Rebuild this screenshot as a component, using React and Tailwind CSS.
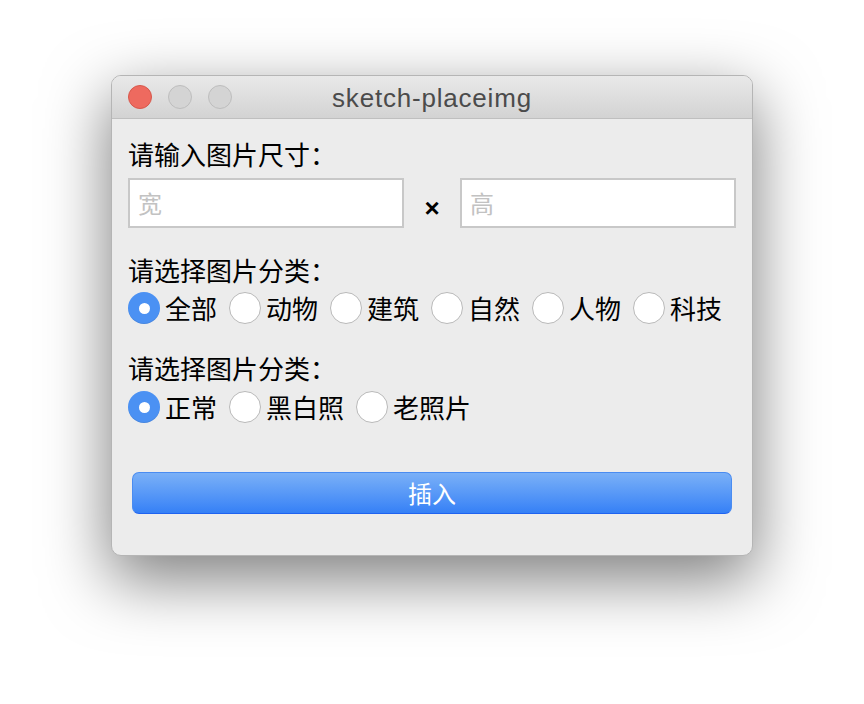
import React from "react";

const cjk = { fontFamily: '"Noto Sans CJK SC", "Noto Sans", sans-serif' };

function Radio({ checked, label }) {
  return (
    <div className="flex items-center mr-[12px]">
      {checked ? (
        <div className="w-[32px] h-[32px] rounded-full bg-[#4b91f3] flex items-center justify-center shadow-[inset_0_-1px_0_rgba(0,0,0,0.08)]">
          <div className="w-[11px] h-[11px] rounded-full bg-white" />
        </div>
      ) : (
        <div className="w-[32px] h-[32px] rounded-full bg-white border-[1.5px] border-[#b9b9b9] box-border" />
      )}
      <span className="ml-[5px] text-[26px] leading-[32px] text-black" style={cjk}>
        {label}
      </span>
    </div>
  );
}

export default function App() {
  return (
    <div className="w-[864px] h-[704px] bg-white pt-[75px] overflow-hidden">
      <div className="w-[642px] ml-[111px] rounded-[10px] border border-[#b5b5b5] bg-[#ececec] shadow-[0_22px_64px_2px_rgba(0,0,0,0.5)] overflow-hidden">
        {/* Title bar */}
        <div className="relative h-[43px] bg-gradient-to-b from-[#e9e9e9] to-[#d3d3d3] border-b border-[#bfbfbf] flex items-center">
          <div className="flex items-center gap-[16px] pl-[16px]">
            <div className="w-[24px] h-[24px] rounded-full bg-[#ee6a5f] border border-[#d6584c]" />
            <div className="w-[24px] h-[24px] rounded-full bg-[#d4d4d4] border border-[#bdbdbd]" />
            <div className="w-[24px] h-[24px] rounded-full bg-[#d4d4d4] border border-[#bdbdbd]" />
          </div>
          <div
            className="absolute inset-0 flex items-center justify-center pt-[3px] text-[26px] tracking-[0.8px] text-[#4b4b4b]"
            style={{ fontFamily: '"Liberation Sans", Arial, sans-serif' }}
          >
            sketch-placeimg
          </div>
        </div>

        {/* Body */}
        <div className="pl-[16px] pr-[15px] pt-[20px] pb-[41px]">
          <div className="text-[26px] leading-[30px] text-black" style={cjk}>
            请输入图片尺寸：
          </div>
          <div className="flex items-center mt-[9px]">
            <div
              className="w-[276px] h-[50px] bg-white border-2 border-[#c8c8c8] flex items-center pl-[8px] text-[24px] text-[#c2c2c2]"
              style={cjk}
            >
              宽
            </div>
            <div
              className="w-[56px] text-center pt-[11px] text-[26px] font-bold text-black"
              style={{ fontFamily: '"Liberation Sans", Arial, sans-serif' }}
            >
              ×
            </div>
            <div
              className="w-[276px] h-[50px] bg-white border-2 border-[#c8c8c8] flex items-center pl-[8px] text-[24px] text-[#c2c2c2]"
              style={cjk}
            >
              高
            </div>
          </div>

          <div className="mt-[27px] text-[26px] leading-[30px] text-black" style={cjk}>
            请选择图片分类：
          </div>
          <div className="flex items-center mt-[7px]">
            <Radio checked label="全部" />
            <Radio label="动物" />
            <Radio label="建筑" />
            <Radio label="自然" />
            <Radio label="人物" />
            <Radio label="科技" />
          </div>

          <div className="mt-[29px] text-[26px] leading-[30px] text-black" style={cjk}>
            请选择图片分类：
          </div>
          <div className="flex items-center mt-[8px]">
            <Radio checked label="正常" />
            <Radio label="黑白照" />
            <Radio label="老照片" />
          </div>

          <div className="mt-[49px] ml-[4px] mr-[5px]">
            <div
              className="h-[42px] rounded-[7px] bg-gradient-to-b from-[#7ab0f7] to-[#3580f6] border border-[#4a8cf1] border-b-[#1f63f0] flex items-center justify-center text-white text-[24px]"
              style={cjk}
            >
              插入
            </div>
          </div>
        </div>
      </div>
    </div>
  );
}
